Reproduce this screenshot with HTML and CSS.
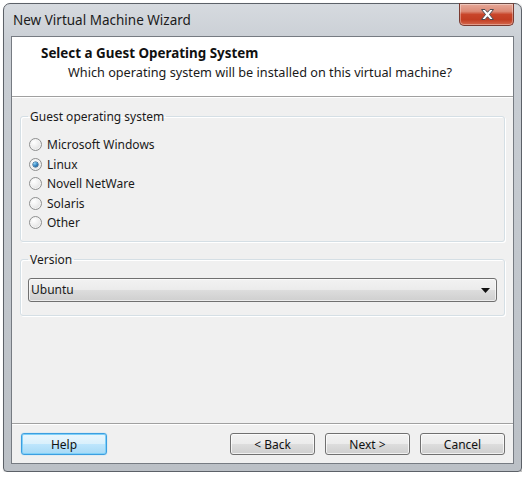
FILE: index.html
```html
<!DOCTYPE html>
<html>
<head>
<meta charset="utf-8">
<link rel="stylesheet" href="styles.css">
</head>
<body>
<div class="window">
  <div class="titlebar">
    <span class="title">New Virtual Machine Wizard</span>
  </div>
  <button class="close" type="button" aria-label="Close">
    <svg width="15" height="13" viewBox="0 0 15 13">
      <path d="M1.5 1.5 H5 L7.5 4.3 L10 1.5 H13.5 L9.5 6.5 L13.5 11.5 H10 L7.5 8.7 L5 11.5 H1.5 L5.5 6.5 Z" fill="#ffffff" stroke="#4a4a52" stroke-width="1" stroke-linejoin="round"/>
    </svg>
  </button>
  <div class="client">
    <div class="header">
      <div class="h-title">Select a Guest Operating System</div>
      <div class="h-sub">Which operating system will be installed on this virtual machine?</div>
    </div>
    <div class="content">
      <fieldset class="group">
        <legend>Guest operating system</legend>
        <div class="group-body os-body">
          <div class="radio-row"><span class="radio"></span><span>Microsoft Windows</span></div>
          <div class="radio-row"><span class="radio checked"></span><span>Linux</span></div>
          <div class="radio-row"><span class="radio"></span><span>Novell NetWare</span></div>
          <div class="radio-row"><span class="radio"></span><span>Solaris</span></div>
          <div class="radio-row"><span class="radio"></span><span>Other</span></div>
        </div>
      </fieldset>
      <fieldset class="group group-ver">
        <legend>Version</legend>
        <div class="group-body ver-body">
          <div class="select">
            <span>Ubuntu</span>
            <svg class="arrow" width="9" height="5" viewBox="0 0 9 5"><path d="M0 0 H9 L4.5 5 Z" fill="#111"/></svg>
          </div>
        </div>
      </fieldset>
    </div>
    <div class="footer">
      <button class="btn btn-default" type="button">Help</button>
      <div class="spacer"></div>
      <button class="btn" type="button">&lt; Back</button>
      <button class="btn" type="button">Next &gt;</button>
      <button class="btn" type="button">Cancel</button>
    </div>
  </div>
</div>
</body>
</html>
```

FILE: styles.css
```css
html, body {
  margin: 0;
  padding: 0;
  background: #ffffff;
}
body {
  padding: 3px 0 0 3px;
  font-family: "Noto Sans", "DejaVu Sans", sans-serif;
  font-size: 12px;
  color: #1a1a1a;
}
.window {
  position: relative;
  box-sizing: border-box;
  width: 519px;
  height: 469px;
  border: 1px solid #5c6168;
  border-radius: 7px 7px 4px 4px;
  background: linear-gradient(180deg, #d6dadf 0px, #c9ced4 40px, #bbc0c6 100%);
  padding: 0 7px 7px 7px;
  display: flex;
  flex-direction: column;
  box-shadow: 1px 1px 2px rgba(0,0,0,0.35);
}
.titlebar {
  height: 32px;
  display: flex;
  align-items: center;
  padding-left: 2px;
}
.title {
  font-size: 13.5px;
  color: #1b1b1b;
  margin-top: -1px;
}
.close {
  position: absolute;
  top: -1px;
  right: 7px;
  width: 55px;
  height: 23px;
  margin: 0;
  padding: 0;
  border: 1px solid #7a3a30;
  border-top-color: #6a4a45;
  border-radius: 0 0 5px 5px;
  background: linear-gradient(180deg, #e6a898 0%, #dc8a76 35%, #c8452a 50%, #c23d22 75%, #d5694e 100%);
  box-shadow: inset 0 0 0 1px rgba(255,255,255,0.35);
  display: flex;
  align-items: center;
  justify-content: center;
}
.close svg { display: block; margin-left: 1px; }
.client {
  flex: 1;
  display: flex;
  flex-direction: column;
  border: 1px solid #767b82;
  background: #f0f0f0;
}
.header {
  height: 60px;
  box-sizing: border-box;
  background: #ffffff;
  border-bottom: 1px solid #a0a0a0;
  padding: 8px 0 0 29px;
}
.h-title {
  font-weight: bold;
  font-size: 13.4px;
  line-height: 17px;
  color: #111;
}
.h-sub {
  padding-left: 27px;
  font-size: 12.7px;
  line-height: 17px;
  margin-top: 2px;
  color: #1a1a1a;
}
.content {
  flex: 1;
  padding: 12px 8px 0 8px;
  box-shadow: inset 0 1px 0 #ffffff;
}
.group {
  margin: 0;
  padding: 0;
  border: 1px solid #d5dfe5;
  border-radius: 3px;
  box-shadow: inset 1px 1px 0 #ffffff, 1px 1px 0 #ffffff;
}
.group legend {
  margin-left: 7px;
  padding: 0 2px;
  line-height: 15px;
  color: #1a1a1a;
}
.os-body {
  padding: 11px 0 8px 8px;
}
.radio-row {
  display: flex;
  align-items: center;
  height: 19.5px;
}
.radio {
  width: 11px;
  height: 11px;
  border: 1px solid #8e8f8f;
  border-radius: 50%;
  background: radial-gradient(circle at 35% 30%, #ffffff 0%, #f1f1f1 40%, #d6d6d6 100%);
  box-shadow: inset 0 0 0 1px #f4f4f4;
  margin-right: 5px;
  position: relative;
}
.radio.checked::after {
  content: "";
  position: absolute;
  left: 3px;
  top: 3px;
  width: 5px;
  height: 5px;
  border-radius: 50%;
  background: radial-gradient(circle at 35% 30%, #8cd1f5 0%, #2a7ab8 55%, #12406e 100%);
  box-shadow: 0 0 0 0.5px #1a4d7a;
}
.group-ver {
  margin-top: 10px;
}
.ver-body {
  padding: 11px 7px 13px 7px;
}
.select {
  height: 24px;
  box-sizing: border-box;
  border: 1px solid #707070;
  border-radius: 3px;
  background: linear-gradient(180deg, #f2f2f2 0%, #ebebeb 50%, #dddddd 50%, #cfcfcf 100%);
  box-shadow: inset 0 0 0 1px rgba(255,255,255,0.6);
  display: flex;
  align-items: center;
  justify-content: space-between;
  padding: 0 6px 0 2px;
}
.arrow { display: block; margin-top: 1px; }
.footer {
  display: flex;
  align-items: center;
  border-top: 1px solid #a0a0a0;
  box-shadow: inset 0 1px 0 #ffffff;
  padding: 9px 8px 8px 9px;
  gap: 10px;
}
.spacer { flex: 1; }
.btn {
  width: 85px;
  height: 22px;
  margin: 0;
  padding: 0;
  font-family: inherit;
  font-size: 12px;
  color: #111;
  border: 1px solid #707070;
  border-radius: 3px;
  background: linear-gradient(180deg, #f2f2f2 0%, #ebebeb 50%, #dddddd 50%, #cfcfcf 100%);
  box-shadow: inset 0 0 0 1px rgba(255,255,255,0.7);
}
.btn-default {
  width: 86px;
  border-color: #3c9ee0;
  background: linear-gradient(180deg, #eaf6fd 0%, #d9f0fc 50%, #bee6fd 50%, #a7d9f5 100%);
  box-shadow: inset 0 0 0 1px #7fd0f8, 0 0 1px #5cc0f5;
}
```
